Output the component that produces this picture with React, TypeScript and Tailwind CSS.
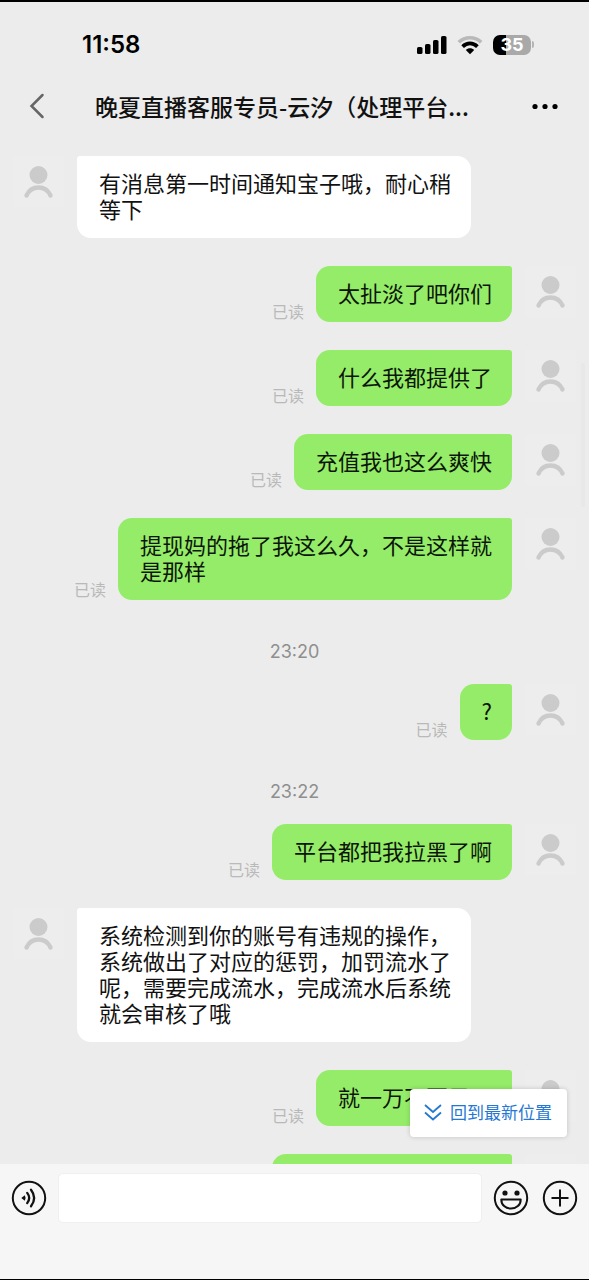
import React from "react";

type Item = { kind: "in" | "out" | "time" | "peek"; text: string };

const items: Item[] = [
  { kind: "in", text: "有消息第一时间通知宝子哦，耐心稍等下" },
  { kind: "out", text: "太扯淡了吧你们" },
  { kind: "out", text: "什么我都提供了" },
  { kind: "out", text: "充值我也这么爽快" },
  { kind: "out", text: "提现妈的拖了我这么久，不是这样就是那样" },
  { kind: "time", text: "23:20" },
  { kind: "out", text: "?" },
  { kind: "time", text: "23:22" },
  { kind: "out", text: "平台都把我拉黑了啊" },
  {
    kind: "in",
    text: "系统检测到你的账号有违规的操作，系统做出了对应的惩罚，加罚流水了呢，需要完成流水，完成流水后系统就会审核了哦",
  },
  { kind: "out", text: "就一万不要黑了" },
  { kind: "peek", text: "" },
];

function Avatar() {
  return (
    <div className="h-[51px] w-[51px] shrink-0 self-start bg-[#ededed]">
      <svg viewBox="0 0 51 51" className="h-full w-full" aria-hidden="true">
        <circle cx="25.5" cy="19" r="9" fill="#cbcbcb" />
        <path d="M13.5 39.5C16 34 20 31.5 25.5 31.5S35 34 37.5 39.5" fill="none" stroke="#cbcbcb" strokeWidth="4.4" strokeLinecap="round" />
      </svg>
    </div>
  );
}

function Message({ item }: { item: Item }) {
  if (item.kind === "time") {
    return (
      <li className="pt-[13px] pb-[21px] text-center font-['Inter','Noto_Sans_CJK_SC',sans-serif] text-[18px] leading-[22px] text-[#8f8f8f]">
        {item.text}
      </li>
    );
  }
  if (item.kind === "in") {
    return (
      <li className="mb-7 flex gap-[13px] px-[13px]">
        <Avatar />
        <p className="max-w-[394px] rounded-[14px] rounded-tl-[3px] bg-white pt-[13px] pr-5 pb-[17px] pl-[22px] text-[22px] leading-[26px] text-[#111]">
          {item.text}
        </p>
      </li>
    );
  }
  if (item.kind === "peek") {
    return (
      <li className="flex justify-end gap-[13px] px-[13px]">
        <div className="h-14 w-60 rounded-[14px] rounded-tr-[3px] bg-[#95ec69]" />
        <Avatar />
      </li>
    );
  }
  return (
    <li className="mb-7 flex items-end justify-end px-[13px]">
      <span className="mr-3 shrink-0 pb-px text-[16px] leading-5 text-[#b9b9b9]">已读</span>
      <p className="mr-[13px] max-w-[394px] rounded-[14px] rounded-tr-[3px] bg-[#95ec69] pt-[13px] pr-5 pb-[17px] pl-[22px] text-[22px] leading-[26px] text-[#0c1608]">
        {item.text}
      </p>
      <Avatar />
    </li>
  );
}

function StatusBar() {
  return (
    <div className="flex h-[83px] shrink-0 items-center justify-between pt-[2px] pr-[55px] pl-[82px]">
      <span className="font-['Inter',sans-serif] text-[24px] leading-7 font-semibold text-black">11:58</span>
      <div className="flex items-center gap-[10px]">
        <svg viewBox="0 0 30 20" className="h-5 w-[30px]" aria-hidden="true">
          <rect x="0" y="12" width="5.5" height="7" rx="1.6" />
          <rect x="8" y="9" width="5.5" height="10" rx="1.6" />
          <rect x="16" y="5" width="5.5" height="14" rx="1.6" />
          <rect x="24" y="1" width="5.5" height="18" rx="1.6" />
        </svg>
        <svg viewBox="0 0 26 20" className="h-5 w-[26px]" fill="none" aria-hidden="true">
          <path d="M1.8 7.2C8 1.2 18 1.2 24.2 7.2" stroke="#b9b9b9" strokeWidth="3.6" />
          <path d="M5.6 11.6C10 7.4 16 7.4 20.4 11.6" stroke="#000" strokeWidth="3.8" />
          <path d="M8.8 15C11 12.8 15 12.8 17.2 15L13 19.2Z" fill="#000" />
        </svg>
        <div className="flex items-center gap-px">
          <div className="flex h-5 w-[38px] items-center justify-center rounded-[7px] bg-linear-to-r from-black from-35% to-[#a9a9a9] to-35% font-['Inter',sans-serif] text-[18px] leading-5 font-bold text-white">
            35
          </div>
          <div className="h-[7px] w-[2px] rounded-r-full bg-[#b5b5b5]" />
        </div>
      </div>
    </div>
  );
}

export default function App() {
  return (
    <div className="flex h-screen flex-col overflow-hidden border-t-2 border-b border-black bg-[#ececec] font-['Noto_Sans_CJK_SC',sans-serif]">
      <StatusBar />
      <header className="flex h-[42px] shrink-0 items-center px-[29px]">
        <button type="button" aria-label="返回" className="w-[66px] shrink-0">
          <svg viewBox="0 0 16 26" className="h-[26px] w-4" fill="none" aria-hidden="true">
            <path d="M13.5 2L2.5 13L13.5 24" stroke="#666" strokeWidth="2.5" strokeLinecap="round" />
          </svg>
        </button>
        <h1 className="min-w-0 flex-1 truncate text-[23px] leading-[34px] font-medium text-[#111]">
          晚夏直播客服专员-云汐（处理平台...
        </h1>
        <button type="button" aria-label="更多" className="shrink-0">
          <svg viewBox="0 0 30 26" className="h-[26px] w-[30px]" aria-hidden="true">
            <circle cx="5" cy="13.5" r="2.6" />
            <circle cx="15" cy="13.5" r="2.6" />
            <circle cx="25" cy="13.5" r="2.6" />
          </svg>
        </button>
      </header>

      <div className="relative min-h-0 flex-1">
        <ul className="h-full overflow-hidden pt-[29px]">
          {items.map((item, i) => (
            <Message key={i} item={item} />
          ))}
        </ul>
        <div className="absolute top-[236px] right-1 h-[144px] w-1 rounded-full bg-[#e8e8e8]" />
        <button
          type="button"
          className="absolute right-[22px] bottom-[27px] flex h-12 items-center gap-2 rounded-[4px] bg-white pr-[15px] pb-[3px] pl-[14px] text-[17px] leading-6 text-[#2478d4] shadow-[0_0_5px_rgba(0,0,0,0.18)]"
        >
          <svg viewBox="0 0 18 18" className="h-[18px] w-[18px]" fill="none" stroke="#2478d4" strokeWidth="1.8" aria-hidden="true">
            <path d="M1 2L9 9L17 2M1 9.5L9 16.5L17 9.5" />
          </svg>
          回到最新位置
        </button>
      </div>

      <footer className="flex h-[115px] shrink-0 items-start gap-[11px] bg-[#f6f6f6] px-[11px] pt-[9px]">
        <button type="button" aria-label="语音" className="mt-[7px] shrink-0">
          <svg viewBox="0 0 36 36" className="h-9 w-9" fill="none" stroke="#111" strokeWidth="2" aria-hidden="true">
            <circle cx="18" cy="18" r="16.2" />
            <path d="M13.8 15.2L10.3 18L13.8 20.8Q15.4 18 13.8 15.2Z" fill="#111" stroke="none" />
            <path d="M16.2 12.9Q20.2 18 16.2 23.1" strokeWidth="2.3" strokeLinecap="round" />
            <path d="M20 9.7Q26.3 18 20 26.3" strokeWidth="2.3" strokeLinecap="round" />
          </svg>
        </button>
        <input
          type="text"
          aria-label="消息"
          className="h-[50px] min-w-0 flex-1 rounded-[5px] border border-[#efefef] bg-white px-3 text-[22px] outline-none"
        />
        <div className="mt-[7px] flex shrink-0 gap-[13px]">
          <button type="button" aria-label="表情">
            <svg viewBox="0 0 36 36" className="h-9 w-9" fill="none" stroke="#111" strokeWidth="2" aria-hidden="true">
              <circle cx="18" cy="18" r="16.2" />
              <circle cx="12" cy="13" r="2.6" fill="#111" stroke="none" />
              <circle cx="24" cy="13" r="2.6" fill="#111" stroke="none" />
              <path d="M8.3 19.4H27.7C27.7 25 23.4 28.6 18 28.6S8.3 25 8.3 19.4Z" strokeLinejoin="round" />
            </svg>
          </button>
          <button type="button" aria-label="添加">
            <svg viewBox="0 0 36 36" className="h-9 w-9" fill="none" stroke="#111" strokeWidth="2" aria-hidden="true">
              <circle cx="18" cy="18" r="16.2" />
              <path d="M18 9.5V26.5M9.5 18H26.5" />
            </svg>
          </button>
        </div>
      </footer>
    </div>
  );
}
